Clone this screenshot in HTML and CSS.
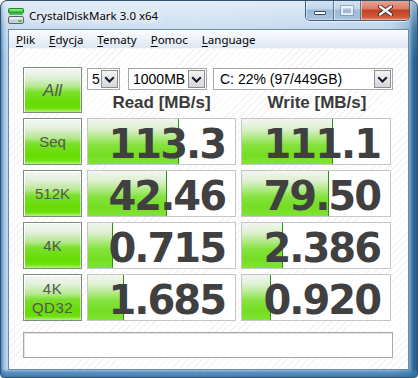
FILE: index.html
```html
<!DOCTYPE html>
<html>
<head>
<meta charset="utf-8">
<title>CrystalDiskMark 3.0 x64</title>
<link rel="stylesheet" href="styles.css">
</head>
<body>
<div class="window">
  <div class="titlebar">
    <svg class="app-icon" width="16" height="16" viewBox="0 0 16 16">
      <rect x="0.5" y="0.5" width="15" height="4.5" rx="1" fill="#3cc43c" stroke="#1f8a1f"/>
      <rect x="1.5" y="1.2" width="13" height="1.4" fill="#9ef09e"/>
      <rect x="1" y="5.5" width="14" height="1.2" fill="#2aa82a"/>
      <rect x="0.5" y="8.5" width="15" height="7" rx="1.5" fill="#c9cdd1" stroke="#5d6670"/>
      <rect x="1.5" y="9.3" width="13" height="2" fill="#eef0f2"/>
      <rect x="10.5" y="12" width="3" height="2" fill="#2ecc2e"/>
    </svg>
    <span class="title">CrystalDiskMark 3.0 x64</span>
    <div class="caption-buttons">
      <div class="cb cb-min"><span class="glyph-min"></span></div>
      <div class="cb cb-max"><span class="glyph-max"></span></div>
      <div class="cb cb-close">
        <svg width="15" height="11" viewBox="0 0 15 11">
          <path d="M2 1.5 L13 9.5 M13 1.5 L2 9.5" stroke="#4a2a24" stroke-width="4.2" stroke-linecap="round"/>
          <path d="M2 1.5 L13 9.5 M13 1.5 L2 9.5" stroke="#ffffff" stroke-width="2.2" stroke-linecap="round"/>
        </svg>
      </div>
    </div>
  </div>
  <div class="client">
    <div class="menubar">
      <span class="menu"><u>P</u>lik</span>
      <span class="menu"><u>E</u>dycja</span>
      <span class="menu"><u>T</u>ematy</span>
      <span class="menu"><u>P</u>omoc</span>
      <span class="menu"><u>L</u>anguage</span>
    </div>
    <div class="content">
      <div class="top">
        <div class="btn btn-all">All</div>
        <div class="top-right">
          <div class="selects">
            <div class="select sel-count"><span class="sel-text">5</span><span class="arrow"><svg width="11" height="7" viewBox="0 0 11 7"><path d="M1.2 1.2 L5.5 5.5 L9.8 1.2" fill="none" stroke="#141830" stroke-width="2"/></svg></span></div>
            <div class="select sel-size"><span class="sel-text">1000MB</span><span class="arrow"><svg width="11" height="7" viewBox="0 0 11 7"><path d="M1.2 1.2 L5.5 5.5 L9.8 1.2" fill="none" stroke="#141830" stroke-width="2"/></svg></span></div>
            <div class="select sel-drive"><span class="sel-text">C: 22% (97/449GB)</span><span class="arrow"><svg width="11" height="7" viewBox="0 0 11 7"><path d="M1.2 1.2 L5.5 5.5 L9.8 1.2" fill="none" stroke="#141830" stroke-width="2"/></svg></span></div>
          </div>
          <div class="headers">
            <div class="hdr">Read [MB/s]</div>
            <div class="hdr">Write [MB/s]</div>
          </div>
        </div>
      </div>
      <div class="grid">
        <div class="btn">Seq</div>
        <div class="result"><div class="bar" style="width:91px"></div><span class="val">113.3</span></div>
        <div class="result"><div class="bar" style="width:91px"></div><span class="val">111.1</span></div>

        <div class="btn">512K</div>
        <div class="result"><div class="bar" style="width:79px"></div><span class="val">42.46</span></div>
        <div class="result"><div class="bar" style="width:87px"></div><span class="val">79.50</span></div>

        <div class="btn">4K</div>
        <div class="result"><div class="bar" style="width:25px"></div><span class="val">0.715</span></div>
        <div class="result"><div class="bar" style="width:41px"></div><span class="val">2.386</span></div>

        <div class="btn btn-two">4K<br>QD32</div>
        <div class="result"><div class="bar" style="width:36px"></div><span class="val">1.685</span></div>
        <div class="result"><div class="bar" style="width:29px"></div><span class="val">0.920</span></div>
      </div>
      <div class="status"></div>
    </div>
  </div>
</div>
</body>
</html>
```

FILE: styles.css
```css
* { box-sizing: border-box; }
html, body { margin: 0; padding: 0; }
body {
  width: 418px;
  height: 378px;
  overflow: hidden;
  background: #ffffff;
  font-family: "Liberation Sans", Arial, sans-serif;
}

.window {
  width: 418px;
  height: 378px;
  border: 1px solid #33516e;
  border-radius: 7px 7px 4px 4px;
  display: flex;
  flex-direction: column;
  background:
    linear-gradient(to bottom, rgba(255,255,255,0.55) 0, rgba(255,255,255,0.15) 28px, rgba(255,255,255,0) 60px),
    linear-gradient(to bottom, rgba(60,120,170,0) 0, rgba(60,120,170,0) 368px, rgba(60,125,180,0.75) 371px, rgba(40,100,150,0.85) 377px),
    linear-gradient(to right, #4f88ba 0, #9fc2e4 3px, #bcd4ec 6px, #c4daf0 200px, #b3cde8 390px, #7eaad0 408px, #2f6b9b 412px, #1f5885 417px);
  overflow: hidden;
}

.titlebar {
  height: 28px;
  flex: none;
  display: flex;
  align-items: center;
  padding-left: 7px;
}
.app-icon { flex: none; margin-top: 2px; }
.title {
  margin-left: 5px;
  margin-top: 1px;
  font-family: "Noto Sans", "Open Sans", sans-serif;
  font-size: 11.5px;
  color: #000;
  text-shadow: 0 0 6px #ffffff, 0 0 10px #ffffff, 0 0 12px #ffffff;
}

.caption-buttons {
  margin-left: auto;
  margin-right: 7px;
  align-self: flex-start;
  margin-top: -1px;
  display: flex;
  height: 21px;
  border: 1px solid #3f5a75;
  border-top: none;
  border-radius: 0 0 5px 5px;
  overflow: hidden;
  box-shadow: 0 1px 0 rgba(255,255,255,0.6);
}
.cb {
  height: 100%;
  display: flex;
  align-items: center;
  justify-content: center;
  box-shadow: inset 1px 0 0 rgba(255,255,255,0.5), inset 0 -1px 0 rgba(255,255,255,0.35);
}
.cb-min, .cb-max {
  width: 28px;
  background: linear-gradient(to bottom, #d6e4f2 0, #c2d5e9 45%, #9db9d6 50%, #a9c4df 100%);
  border-right: 1px solid #5b7894;
}
.cb-max { width: 27px; }
.cb-close {
  width: 48px;
  background: linear-gradient(to bottom, #e9a89a 0, #d97a62 45%, #c2401f 50%, #d0573a 85%, #e28c68 100%);
}
.glyph-min {
  width: 12px;
  height: 4px;
  margin-top: 5px;
  background: #ffffff;
  border: 1px solid #3a4b5c;
  border-radius: 1px;
}
.glyph-max {
  width: 12px;
  height: 9px;
  border: 2px solid rgba(240,246,252,0.85);
  outline: 1px solid rgba(90,120,150,0.45);
  background: transparent;
}

.client {
  flex: 1;
  margin: 0 8px 7px 7px;
  border: 1px solid #6f8aa6;
  background-color: #ffffff;
  background-image: repeating-linear-gradient(135deg, #ffffff 0, #ffffff 4px, #f3f3f3 4px, #f3f3f3 5px);
  display: flex;
  flex-direction: column;
}

.menubar {
  height: 19px;
  flex: none;
  display: flex;
  align-items: center;
  padding-left: 1px;
  background: linear-gradient(to bottom, #fbfcfe 0, #eef3f9 45%, #dde6f1 100%);
  border-bottom: 1px solid #f4f6f9;
  font-family: "Noto Sans", "Open Sans", sans-serif;
  font-size: 11.5px;
  color: #000;
}
.menu { padding: 0 6px; margin-right: 2px; }
.menu u { text-decoration-thickness: 1px; text-underline-offset: 2px; }

.content {
  padding: 18px 0 0 14px;
  display: flex;
  flex-direction: column;
}

.top {
  display: flex;
  gap: 5px;
  height: 46px;
}

.btn {
  width: 59px;
  height: 47px;
  flex: none;
  display: flex;
  align-items: center;
  justify-content: center;
  text-align: center;
  border: 1px solid #7d8c7d;
  box-shadow: inset 1px 1px 0 #ffffff, inset -1px 0 0 rgba(255,255,255,0.5);
  background: linear-gradient(to bottom, #f4f6f4 0, #e4f0de 20%, #b5e88f 42%, #7ae02c 55%, #66dc00 80%, #6fe010 92%, #b3f27a 100%);
  font-family: "Liberation Sans", Arial, sans-serif;
  font-size: 15px;
  color: #555555;
}
.btn-all {
  height: 46px;
  font-style: italic;
  font-size: 17px;
  padding-top: 2px;
}
.btn-two { line-height: 19px; font-size: 15px; letter-spacing: 0.5px; }

.top-right {
  display: flex;
  flex-direction: column;
}
.selects {
  display: flex;
  margin-top: 1px;
  height: 22px;
}
.select {
  height: 22px;
  border: 1px solid #a3a8ad;
  background: #ffffff;
  display: flex;
  align-items: center;
  padding: 1px;
  font-family: "Liberation Sans", Arial, sans-serif;
  font-size: 14px;
  color: #000;
}
.sel-text { flex: 1; padding-left: 3px; white-space: nowrap; }
.arrow {
  width: 17px;
  height: 18px;
  flex: none;
  display: flex;
  align-items: center;
  justify-content: center;
  border: 1px solid #8b8f94;
  background: linear-gradient(to bottom, #f4f4f4 0, #e6e6e6 50%, #d6d6d6 100%);
}
.sel-count { width: 33px; }
.sel-size { width: 79px; margin-left: 8px; }
.sel-drive { width: 180px; margin-left: 6px; }
.sel-drive .sel-text { padding-left: 5px; }

.headers {
  display: flex;
  gap: 5px;
  flex: 1;
}
.hdr {
  width: 149px;
  display: flex;
  align-items: center;
  justify-content: center;
  font-family: "Liberation Sans", Arial, sans-serif;
  font-weight: bold;
  font-size: 17px;
  color: #3a3a3a;
  padding-top: 2px;
}
.hdr + .hdr { width: 150px; padding-left: 2px; }

.grid {
  margin-top: 5px;
  display: grid;
  grid-template-columns: 59px 149px 150px;
  grid-auto-rows: 47px;
  column-gap: 5px;
  row-gap: 5px;
}

.result {
  position: relative;
  border: 1px solid #c6c6c6;
  background: #ffffff;
  display: flex;
  align-items: center;
  justify-content: flex-end;
  padding-right: 10px;
  overflow: hidden;
}
.bar {
  position: absolute;
  left: 0;
  top: 0;
  bottom: 0;
  background: linear-gradient(to bottom, #f3f6f1 0, #dcefcf 22%, #a6e874 45%, #84e23c 58%, #74de22 80%, #80e434 100%);
  border-right: 1px solid #2f8f1c;
}
.val {
  position: relative;
  font-family: "DejaVu Sans", sans-serif;
  font-weight: bold;
  font-size: 40px;
  letter-spacing: -2px;
  color: #404040;
  line-height: 1;
  margin-top: 4px;
}

.status {
  margin-top: 11px;
  width: 370px;
  height: 26px;
  border: 1px solid #a8a8a8;
  background: #ffffff;
  box-shadow: inset 1px 1px 0 #e2e2e2;
}
```
